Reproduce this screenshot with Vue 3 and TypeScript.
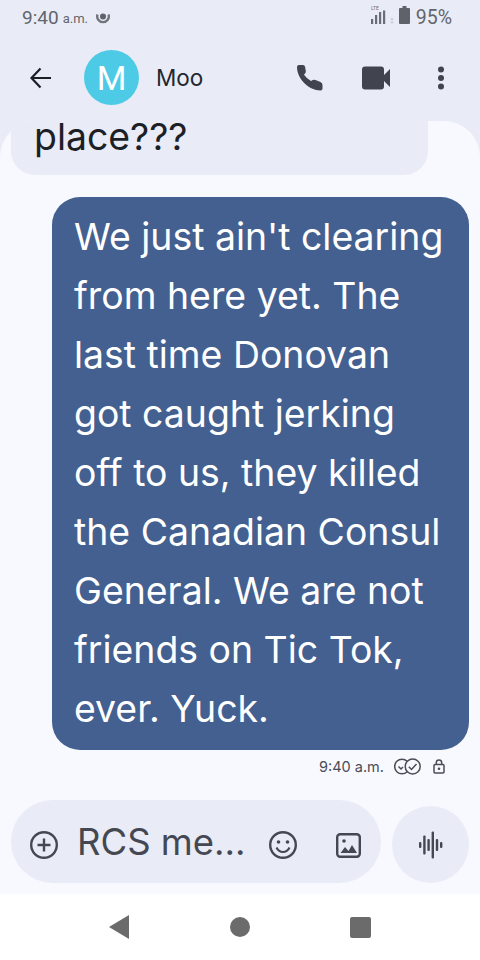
<script setup lang="ts">
const bars = [
  { x: 0, h: 6 },
  { x: 4.2, h: 19 },
  { x: 8.4, h: 12 },
  { x: 12.6, h: 27 },
  { x: 16.8, h: 12 },
  { x: 21, h: 6 },
]
</script>

<template>
  <div class="phone">
    <div class="status">
      <span class="clock">9:40</span>
      <span class="ampm">a.m.</span>
      <svg class="cam" width="14" height="14" viewBox="0 0 14 14">
        <path d="M1.500 4.500a5.800 5.800 0 1 0 11 0" fill="none" stroke="#72757d" stroke-width="2.400" />
        <circle cx="7" cy="6.500" r="3" fill="#5f626a" />
      </svg>
      <span class="spacer"></span>
      <svg class="signal" width="24" height="19" viewBox="0 0 24 19">
        <text x="0" y="3.500" class="lte">LTE</text>
        <rect x="0" y="13" width="2.200" height="5" fill="#6a6d75" />
        <rect x="4" y="9" width="2.200" height="9" fill="#6a6d75" />
        <rect x="8" y="6" width="2.200" height="12" fill="#6a6d75" />
        <rect x="12" y="4.500" width="2.200" height="13.500" fill="#6a6d75" />
        <path d="M21 11.500l1.600 2.500h-3.200zM21 18l1.600-2.500h-3.200z" fill="#c3c6cd" />
      </svg>
      <svg class="battery" width="11" height="18" viewBox="0 0 11 18">
        <path d="M3.500 0h4v2h2.500a1 1 0 0 1 1 1v14a1 1 0 0 1-1 1H1a1 1 0 0 1-1-1V3a1 1 0 0 1 1-1h2.500z" fill="#5f626a" />
      </svg>
      <span class="percent">95%</span>
    </div>

    <header class="header">
      <svg class="back" width="24" height="24" viewBox="0 0 24 24">
        <path d="M22 12H3M11.500 2.500 2.500 12l9 9.500" fill="none" stroke="#1c1f26" stroke-width="2.200" />
      </svg>
      <div class="avatar">M</div>
      <span class="name">Moo</span>
      <svg class="phone-icon" width="26" height="26" viewBox="0 0 26 26">
        <path d="M0 2Q0 0 2 0H6Q7.500 0 8 1.500L8.800 6Q9 7.500 8 8.500L7 9.800Q9.500 13.500 14 16L15.800 15Q17 14.300 18.500 15L23.500 17Q25.500 18 25.500 20V23.500Q25.500 25.500 23.500 25.500C12 25.500 0 14 0 2z" fill="#41444e" />
      </svg>
      <svg class="video-icon" width="28" height="24" viewBox="0 0 28 24">
        <path d="M3 .5h16a3 3 0 0 1 3 3v5.500L28 3v18l-6-6v5.500a3 3 0 0 1-3 3H3a3 3 0 0 1-3-3v-17a3 3 0 0 1 3-3z" fill="#41444e" />
      </svg>
      <svg class="dots" width="6" height="24" viewBox="0 0 6 24">
        <circle cx="3" cy="3.500" r="3" fill="#41444e" />
        <circle cx="3" cy="12" r="3" fill="#41444e" />
        <circle cx="3" cy="20.500" r="3" fill="#41444e" />
      </svg>
    </header>

    <main class="thread">
      <div class="bubble-in">place???</div>
      <div class="bubble-out">
        We just ain't clearing from here yet. The last time Donovan got caught jerking off to us, they killed the Canadian Consul General. We are not friends on Tic Tok, ever. Yuck.
      </div>
      <div class="meta">
        <span class="meta-time">9:40 a.m.</span>
        <svg class="checks" width="27" height="17" viewBox="0 0 27 17">
          <circle cx="8" cy="8.500" r="7.300" fill="none" stroke="#4a4d56" stroke-width="1.500" />
          <circle cx="18.700" cy="8.500" r="7.500" fill="#f8f9ff" stroke="#4a4d56" stroke-width="1.500" />
          <path d="M4.500 8.500l2.500 2.500 2-2M14.800 8.800l2.700 2.700 5-5.500" fill="none" stroke="#4a4d56" stroke-width="1.500" />
        </svg>
        <svg class="lock" width="12" height="15" viewBox="0 0 12 15">
          <rect x="1" y="5.500" width="10" height="8.500" rx="1" fill="none" stroke="#4a4d56" stroke-width="1.500" />
          <path d="M3.300 5.500V3.700a2.700 2.700 0 0 1 5.400 0v1.800" fill="none" stroke="#4a4d56" stroke-width="1.500" />
          <circle cx="6" cy="9.800" r="1.300" fill="#4a4d56" />
        </svg>
      </div>
    </main>

    <footer class="composer">
      <div class="field">
        <svg class="plus" width="28" height="28" viewBox="0 0 28 28">
          <circle cx="14" cy="14" r="12.800" fill="none" stroke="#454852" stroke-width="2.400" />
          <path d="M14 7.500v13M7.500 14h13" fill="none" stroke="#454852" stroke-width="2.400" />
        </svg>
        <span class="placeholder">RCS me...</span>
        <svg class="smile" width="28" height="28" viewBox="0 0 28 28">
          <circle cx="14" cy="14" r="12.800" fill="none" stroke="#454852" stroke-width="2.400" />
          <circle cx="9.500" cy="11" r="1.800" fill="#454852" />
          <circle cx="18.500" cy="11" r="1.800" fill="#454852" />
          <path d="M7.500 16.500c1.500 3 4 4.500 6.500 4.500s5-1.500 6.500-4.500" fill="none" stroke="#454852" stroke-width="2.200" />
        </svg>
        <svg class="image" width="25" height="25" viewBox="0 0 25 25">
          <rect x="1.200" y="1.200" width="22.600" height="22.600" rx="3" fill="none" stroke="#454852" stroke-width="2.400" />
          <circle cx="8" cy="8" r="1.800" fill="#454852" />
          <path d="M4.500 20l4.500-6 3.500 4 3.500-6 5 8z" fill="#454852" />
        </svg>
      </div>
      <div class="mic">
        <svg width="24" height="28" viewBox="0 0 24 28">
          <rect
            v-for="b in bars"
            :key="b.x"
            :x="b.x"
            :y="14 - b.h / 2"
            width="2.400"
            :height="b.h"
            rx="1"
            fill="#454852"
          />
        </svg>
      </div>
    </footer>

    <nav class="nav">
      <span class="nav-back"></span>
      <span class="nav-home"></span>
      <span class="nav-recent"></span>
    </nav>
  </div>
</template>

<style scoped>
.phone {
  width: 480px;
  height: 960px;
  display: flex;
  flex-direction: column;
  background: #e9ecf6;
  font-family: Inter, "Liberation Sans", sans-serif;
  overflow: hidden;
}

.status {
  height: 34px;
  display: flex;
  align-items: center;
  padding: 0 28px 0 22px;
  color: #62656d;
  font-family: Roboto, sans-serif;
}

.clock {
  font-size: 19px;
}

.ampm {
  font-size: 13px;
  margin-left: 4px;
  margin-top: 3px;
}

.cam {
  margin-left: 8px;
}

.spacer {
  flex: 1;
}

.signal {
  align-self: flex-start;
  margin-top: 6px;
}

.lte {
  font-size: 5px;
  fill: #6a6d75;
}

.battery {
  align-self: flex-start;
  margin-top: 6px;
  margin-left: 4px;
}

.percent {
  font-size: 19.5px;
  margin-left: 6px;
}

.header {
  height: 87px;
  margin-bottom: -2px;
  display: flex;
  align-items: center;
  padding: 0 0 2px 29px;
}

.avatar {
  width: 55px;
  height: 55px;
  margin-left: 31px;
  border-radius: 50%;
  background: #4dcbe6;
  color: #fff;
  font-size: 34px;
  font-family: Roboto, sans-serif;
  display: flex;
  align-items: center;
  justify-content: center;
}

.name {
  margin-left: 17px;
  font-size: 22.5px;
  color: #24272f;
  flex: 1;
}

.phone-icon {
  margin-right: 39px;
}

.video-icon {
  margin-right: 48px;
}

.dots {
  margin-right: 36px;
}

.thread {
  flex: 1;
  min-height: 0;
  display: flex;
  flex-direction: column;
  background: #f8f9ff;
  border-radius: 36px 36px 0 0;
  overflow: hidden;
}

.bubble-in {
  width: 417px;
  margin: -14px 0 0 11px;
  padding: 0 23px 9px;
  box-sizing: border-box;
  background: #e9ecf6;
  border-radius: 0 0 24px 24px;
  color: #1c1f26;
  font-size: 37.4px;
  line-height: 59px;
  flex-shrink: 0;
}

.bubble-out {
  width: 417px;
  margin: 22px 0 0 52px;
  padding: 10px 22px 12px;
  box-sizing: border-box;
  background: #436090;
  border-radius: 28px;
  color: #fff;
  font-size: 37.4px;
  line-height: 59px;
  flex-shrink: 0;
}

.meta {
  display: flex;
  align-items: center;
  justify-content: flex-end;
  padding: 8px 35px 0 0;
  height: 17px;
  color: #4a4d56;
}

.meta-time {
  font-size: 14.5px;
  margin-right: 10px;
}

.lock {
  margin-left: 12px;
}

.composer {
  height: 93px;
  box-sizing: border-box;
  display: flex;
  align-items: flex-end;
  padding: 0 11px 11px;
  background: #f8f9ff;
  flex-shrink: 0;
}

.field {
  width: 370px;
  height: 83px;
  border-radius: 42px;
  background: #e9ecf6;
  display: flex;
  align-items: center;
  padding-left: 19px;
  box-sizing: border-box;
}

.plus {
  margin-top: 7px;
}

.placeholder {
  margin-left: 19px;
  width: 192px;
  font-size: 36.5px;
  color: #454852;
  white-space: nowrap;
}

.smile {
  margin-top: 7px;
}

.image {
  margin-top: 7px;
  margin-left: 39px;
}

.mic {
  width: 77px;
  height: 77px;
  margin-left: 11px;
  border-radius: 50%;
  background: #e9ecf6;
  display: flex;
  align-items: center;
  justify-content: center;
}

.nav {
  height: 66px;
  flex-shrink: 0;
  background: #fff;
  display: flex;
  align-items: center;
  justify-content: space-between;
  padding: 0 109px;
  box-sizing: border-box;
}

.nav-back {
  width: 0;
  height: 0;
  border-top: 12px solid transparent;
  border-bottom: 12px solid transparent;
  border-right: 20px solid #6b6b6b;
}

.nav-home {
  width: 20px;
  height: 20px;
  border-radius: 50%;
  background: #6b6b6b;
}

.nav-recent {
  width: 21px;
  height: 21px;
  border-radius: 2px;
  background: #6b6b6b;
}
</style>
